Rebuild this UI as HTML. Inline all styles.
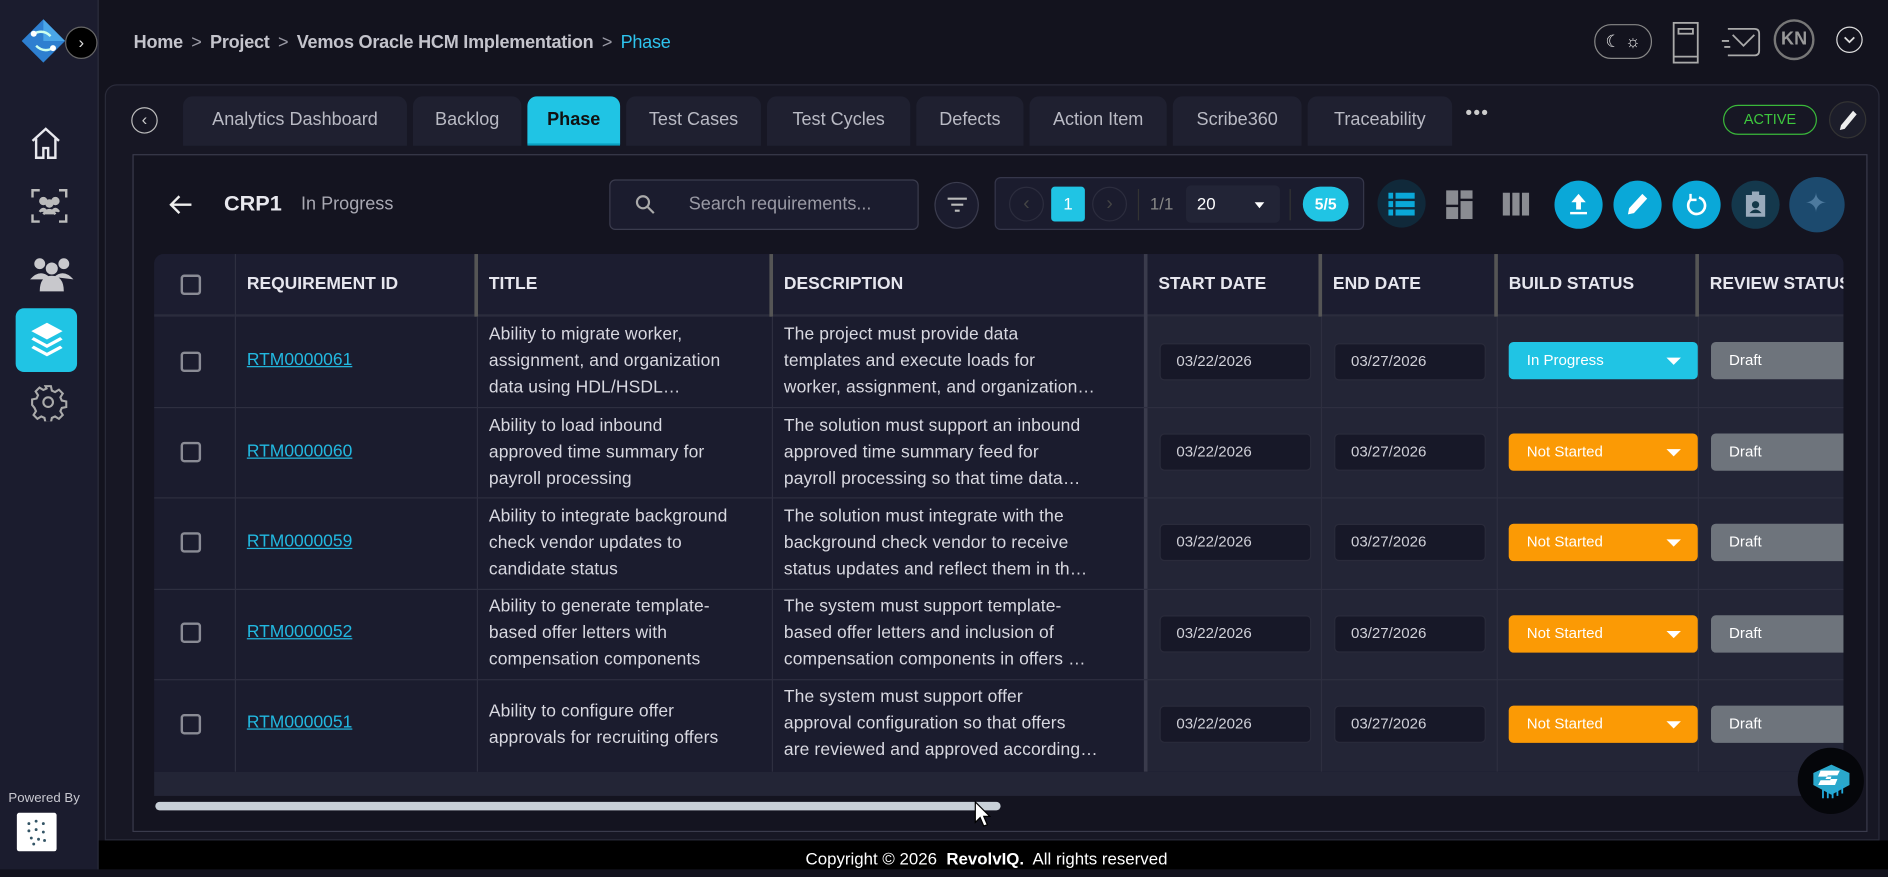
<!DOCTYPE html>
<html><head><meta charset="utf-8"><style>
*{box-sizing:border-box;margin:0;padding:0}
html,body{width:1888px;height:869px;overflow:hidden;background:#13131e;font-family:"Liberation Sans",sans-serif}
#w{position:absolute;left:0;top:0;width:1568px;height:722px;transform:scale(1.204082);transform-origin:0 0;background:#13131e}
.a{position:absolute}
.side{left:0;top:0;width:82px;height:722px;background:#1b1c2e;border-right:1px solid #2c2d3c}
.crumb{left:111px;top:27px;font-size:15px;font-weight:bold;color:#c4c4cc;letter-spacing:-.2px;white-space:nowrap}
.crumb span.s{color:#9a9aa5;font-weight:normal;margin:0 7px}
.main{left:87px;top:70px;width:1474px;height:628px;background:#171724;border:1px solid #2a2b3a;border-radius:10px 10px 0 0}
.tab{top:80px;height:41px;background:#1f2030;border-radius:8px 8px 0 0;color:#b9bac4;font-size:15px;line-height:40px;text-align:center;white-space:nowrap}
.tab.on{background:#20c4e4;color:#111;font-weight:bold;border-bottom:2px solid #0aa0c0}
.inner{left:110px;top:128px;width:1441px;height:563px;border:1px solid #3a3b4c;background:#141420}
.tbl{left:128px;top:211px;width:1403px;height:430px;background:#1b1c2e;border-radius:8px 8px 0 0;overflow:hidden}
.hd{top:0;height:52px;color:#e6e6ee;font-weight:bold;font-size:14.5px;line-height:50px;padding-left:10px;background:#1c1d30;border-bottom:2px solid #2b2c3d;white-space:nowrap;overflow:hidden}
.vl{width:1px;background:#2e2f40}
.hl{height:1px;background:#2e2f40;left:0;width:1403px}
.cell{color:#d8d8e0;font-size:14.5px;line-height:22px;padding-left:10px;white-space:nowrap;overflow:hidden;letter-spacing:.1px}
.lnk{color:#22b8e0;text-decoration:underline;font-size:14.5px}
.cb{width:17px;height:17px;border:2px solid #8a8b95;border-radius:3px}
.dt{width:126px;height:31px;background:#171828;border:1px solid #2a2b3b;border-radius:4px;color:#d0d0d8;font-size:12.5px;line-height:29px;padding-left:13px}
.st{width:157px;height:31px;border-radius:4px;color:#fff;font-size:12.5px;line-height:31px;padding-left:15px}
.st:after{content:"";position:absolute;right:14px;top:13px;border-left:6px solid transparent;border-right:6px solid transparent;border-top:6px solid #fff}
.dr{width:110px;height:31px;background:#6e747c;border-radius:4px 0 0 4px;color:#fff;font-size:12.5px;line-height:31px;padding-left:15px}
.cbtn{width:40px;height:40px;border-radius:50%}
</style></head><body><div id="w">
<div class="a side"></div>
<svg class="a" style="left:16px;top:14px" width="40" height="40" viewBox="0 0 40 40"><path d="M20 2 L38 20 L20 38 L2 20Z" fill="#2e7fd0"/><path d="M20 2 L38 20 L20 20Z" fill="#4aa6e8"/><path d="M12 14 Q20 10 26 16 M14 24 Q20 30 28 26" stroke="#cfe" stroke-width="2" fill="none"/><circle cx="12" cy="14" r="2.5" fill="#fff"/><circle cx="28" cy="26" r="2.5" fill="#fff"/></svg>
<div class="a" style="left:54px;top:22px;width:27px;height:27px;border-radius:50%;background:#000;border:1px solid #666;color:#ddd;font-size:14px;text-align:center;line-height:24px">›</div>
<svg class="a" style="left:24px;top:104px" width="28" height="30" viewBox="0 0 28 30" fill="none" stroke="#e8e8ee" stroke-width="2"><path d="M3 13 L14 3 L25 13 M6 11 V27 H12 V19 H16 V27 H22 V11"/></svg>
<svg class="a" style="left:25px;top:156px" width="32" height="30" viewBox="0 0 32 30" fill="none" stroke="#bbb" stroke-width="2"><path d="M2 8V2H8 M24 2H30V8 M2 22V28H8 M24 28H30V22"/><circle cx="11" cy="11" r="2.5" fill="#bbb"/><circle cx="21" cy="11" r="2.5" fill="#bbb"/><circle cx="16" cy="13" r="2.5" fill="#bbb"/><path d="M8 20 Q11 15 14 20 M18 20 Q21 15 24 20 M11 22 Q16 15 21 22" fill="#bbb"/></svg>
<svg class="a" style="left:23px;top:212px" width="40" height="32" viewBox="0 0 40 32" fill="#c8c8cc"><circle cx="10" cy="7" r="4.5"/><circle cx="30" cy="7" r="4.5"/><circle cx="20" cy="11" r="5"/><path d="M2 20 Q10 11 18 18 V20Z M22 18 Q30 11 38 20 V20Z M10 30 Q10 17 20 17 Q30 17 30 30Z"/></svg>
<div class="a" style="left:13px;top:256px;width:51px;height:53px;background:#20c4e4;border-radius:7px"></div>
<svg class="a" style="left:24px;top:266px" width="30" height="34" viewBox="0 0 30 34" fill="#fff"><path d="M15 2 L28 9 L15 16 L2 9Z"/><path d="M4 14 L15 20 L26 14 L28 16 L15 23 L2 16Z"/><path d="M4 21 L15 27 L26 21 L28 23 L15 30 L2 23Z"/></svg>
<svg class="a" style="left:24px;top:318px" width="32" height="32" viewBox="0 0 24 24" fill="none" stroke="#aaa" stroke-width="1.3"><circle cx="12" cy="12" r="3"/><path d="M10.3 2h3.4l.6 2.8 2 .9 2.4-1.5 2.4 2.4-1.5 2.4.9 2 2.8.6v3.4l-2.8.6-.9 2 1.5 2.4-2.4 2.4-2.4-1.5-2 .9-.6 2.8h-3.4l-.6-2.8-2-.9-2.4 1.5-2.4-2.4 1.5-2.4-.9-2L2 13.7v-3.4l2.8-.6.9-2-1.5-2.4 2.4-2.4 2.4 1.5 2-.9z"/></svg>
<div class="a" style="left:7px;top:657px;font-size:11px;color:#c8c8d0">Powered By</div>
<div class="a" style="left:14px;top:675px;width:33px;height:32px;background:#fff;border-radius:2px"></div>
<svg class="a" style="left:18px;top:678px" width="25" height="26" viewBox="0 0 25 26" fill="#356"><circle cx="6" cy="6" r="1.2"/><circle cx="12" cy="4" r="1.2"/><circle cx="18" cy="6" r="1.2"/><circle cx="6" cy="12" r="1.2"/><circle cx="12" cy="11" r="1.2"/><circle cx="18" cy="13" r="1.2"/><circle cx="8" cy="18" r="1.2"/><circle cx="14" cy="19" r="1.2"/><circle cx="19" cy="20" r="1.2"/><circle cx="10" cy="23" r="1.2"/></svg>

<div class="a crumb">Home<span class="s">&gt;</span>Project<span class="s">&gt;</span>Vemos Oracle HCM Implementation<span class="s">&gt;</span><span style="color:#2ec4ee;font-weight:normal">Phase</span></div>
<div class="a" style="left:1324px;top:20px;width:48px;height:29px;border:1px solid #888;border-radius:14px;color:#eee;font-size:14px;line-height:27px;text-align:center">☾ ☼</div>
<svg class="a" style="left:1387px;top:17px" width="26" height="40" viewBox="0 0 26 40" fill="none" stroke="#aaa" stroke-width="1.5"><rect x="3" y="2" width="20" height="33"/><rect x="7" y="7" width="12" height="4"/><path d="M3 30H23"/></svg>
<svg class="a" style="left:1429px;top:20px" width="34" height="36" viewBox="0 0 34 36" fill="none" stroke="#aaa" stroke-width="1.5"><path d="M6 4H28Q32 4 32 8V22Q32 26 28 26H6"/><path d="M10 9L19 18L28 9"/><path d="M1 14H7 M3 19H8"/></svg>
<div class="a" style="left:1473px;top:16px;width:34px;height:34px;border:2px solid #777;border-radius:50%;color:#999;font-size:15px;font-weight:bold;text-align:center;line-height:30px">KN</div>
<div class="a" style="left:1525px;top:22px;width:22px;height:22px;border:1.5px solid #ddd;border-radius:50%"></div>
<svg class="a" style="left:1530px;top:28px" width="12" height="10" viewBox="0 0 12 10"><path d="M2 3L6 7L10 3" stroke="#ddd" stroke-width="1.5" fill="none"/></svg>

<div class="a main"></div>
<div class="a" style="left:109px;top:89px;width:22px;height:22px;border:1.5px solid #bbb;border-radius:50%;color:#ccc;font-size:14px;text-align:center;line-height:18px">‹</div>
<div class="a tab" style="left:152px;width:186px">Analytics Dashboard</div>
<div class="a tab" style="left:343px;width:90px">Backlog</div>
<div class="a tab on" style="left:438px;width:77px">Phase</div>
<div class="a tab" style="left:520px;width:112px">Test Cases</div>
<div class="a tab" style="left:637px;width:119px">Test Cycles</div>
<div class="a tab" style="left:761px;width:89px">Defects</div>
<div class="a tab" style="left:855px;width:114px">Action Item</div>
<div class="a tab" style="left:974px;width:107px">Scribe360</div>
<div class="a tab" style="left:1086px;width:120px">Traceability</div>
<div class="a" style="left:1217px;top:86px;color:#ccc;font-size:16px;letter-spacing:1px">•••</div>
<div class="a" style="left:1431px;top:87px;width:78px;height:25px;border:1.5px solid #3ab83a;border-radius:13px;color:#3ec83e;font-size:12px;text-align:center;line-height:22px">ACTIVE</div>
<div class="a" style="left:1519px;top:84px;width:31px;height:31px;border-radius:50%;background:#1c1d2a;border:1px solid #333"></div>
<svg class="a" style="left:1526px;top:90px" width="18" height="20" viewBox="0 0 18 20"><path d="M13 2L16 5L6 17L2 18L3 14Z" fill="#eee"/></svg>

<div class="a inner"></div>
<svg class="a" style="left:139px;top:160px" width="22" height="20" viewBox="0 0 22 20" fill="none" stroke="#eee" stroke-width="2"><path d="M20 10H3 M10 3L3 10L10 17"/></svg>
<div class="a" style="left:186px;top:159px;color:#e8e8ee;font-size:18px;font-weight:bold">CRP1</div>
<div class="a" style="left:250px;top:161px;color:#a8a8b2;font-size:15px">In Progress</div>
<div class="a" style="left:506px;top:149px;width:257px;height:42px;border:1px solid #3b3c4e;border-radius:5px;background:#1b1c2e"></div>
<svg class="a" style="left:527px;top:161px" width="18" height="18" viewBox="0 0 18 18" fill="none" stroke="#aaa" stroke-width="1.8"><circle cx="7" cy="7" r="5"/><path d="M11 11L16 16"/></svg>
<div class="a" style="left:572px;top:161px;color:#9a9aa5;font-size:15px">Search requirements...</div>
<div class="a" style="left:776px;top:151px;width:37px;height:39px;border:1px solid #3b3c4e;border-radius:50%;background:#1b1c2e"></div>
<svg class="a" style="left:785px;top:162px" width="20" height="16" viewBox="0 0 20 16" stroke="#bbb" stroke-width="1.8"><path d="M2 3H18 M5 8H15 M8 13H12"/></svg>
<div class="a" style="left:826px;top:147px;width:307px;height:44px;border:1px solid #35364a;border-radius:5px;background:#1b1c2e"></div>
<div class="a" style="left:838px;top:155px;width:29px;height:29px;border:1px solid #2c2d3e;border-radius:50%;color:#444;text-align:center;line-height:27px">‹</div>
<div class="a" style="left:873px;top:155px;width:28px;height:29px;background:#20c4e4;border-radius:3px;color:#fff;font-size:14px;text-align:center;line-height:29px">1</div>
<div class="a" style="left:907px;top:155px;width:29px;height:29px;border:1px solid #2c2d3e;border-radius:50%;color:#444;text-align:center;line-height:27px">›</div>
<div class="a" style="left:945px;top:157px;width:1px;height:26px;background:#333"></div>
<div class="a" style="left:955px;top:161px;color:#888;font-size:14px">1/1</div>
<div class="a" style="left:985px;top:154px;width:78px;height:31px;background:#222436;border-radius:4px;color:#fff;font-size:14px;line-height:31px;padding-left:9px">20</div>
<div class="a" style="left:1042px;top:168px;border-left:4px solid transparent;border-right:4px solid transparent;border-top:5px solid #fff"></div>
<div class="a" style="left:1071px;top:157px;width:1px;height:26px;background:#333"></div>
<div class="a" style="left:1082px;top:155px;width:38px;height:29px;background:#20c4e4;border-radius:15px;color:#fff;font-size:13px;font-weight:bold;text-align:center;line-height:29px">5/5</div>
<div class="a cbtn" style="left:1144px;top:149px;background:#10293a"></div>
<svg class="a" style="left:1153px;top:160px" width="22" height="20" viewBox="0 0 22 20" fill="#0aa8d8"><rect x="0" y="0" width="4" height="5"/><rect x="6" y="0" width="16" height="5"/><rect x="0" y="7" width="4" height="5"/><rect x="6" y="7" width="16" height="5"/><rect x="0" y="14" width="4" height="5"/><rect x="6" y="14" width="16" height="5"/></svg>
<svg class="a" style="left:1201px;top:158px" width="22" height="24" viewBox="0 0 22 24" fill="#8a8c92"><rect x="0" y="0" width="10" height="12"/><rect x="12" y="0" width="10" height="7"/><rect x="12" y="9" width="10" height="15"/><rect x="0" y="14" width="10" height="10"/></svg>
<svg class="a" style="left:1248px;top:160px" width="22" height="20" viewBox="0 0 22 20" fill="#8a8c92"><rect x="0" y="0" width="6" height="19"/><rect x="8" y="0" width="6" height="19"/><rect x="16" y="0" width="6" height="19"/></svg>
<div class="a cbtn" style="left:1291px;top:150px;background:#0aa8d8"></div>
<svg class="a" style="left:1301px;top:159px" width="20" height="22" viewBox="0 0 20 22" fill="#fff"><path d="M10 2L16 9H12V15H8V9H4Z"/><rect x="3" y="17" width="14" height="2"/></svg>
<div class="a cbtn" style="left:1340px;top:150px;background:#0aa8d8"></div>
<svg class="a" style="left:1350px;top:159px" width="20" height="22" viewBox="0 0 20 22"><path d="M14 2L18 6L7 18L2 19L3 14Z" fill="#fff"/></svg>
<div class="a cbtn" style="left:1389px;top:150px;background:#0aa8d8"></div>
<svg class="a" style="left:1399px;top:160px" width="20" height="20" viewBox="0 0 20 20" fill="none" stroke="#fff" stroke-width="2.2"><path d="M6 5A7 7 0 1 0 12 4"/><path d="M5 1V6H10" stroke-width="2"/></svg>
<div class="a cbtn" style="left:1438px;top:150px;background:#14384c"></div>
<svg class="a" style="left:1449px;top:159px" width="18" height="22" viewBox="0 0 18 22" fill="#9ab"><path d="M1 3H17V21H1Z M6 0H12V5H6Z"/><circle cx="9" cy="11" r="3" fill="#143848"/><path d="M4 18Q9 12 14 18Z" fill="#143848"/></svg>
<div class="a cbtn" style="left:1486px;top:147px;width:46px;height:46px;background:#1c4a6e"></div>
<div class="a" style="left:1499px;top:156px;color:#4d7a9e;font-size:22px">✦</div>

<div class="a tbl">
 <div class="a hd" style="left:0;width:67px"></div>
 <div class="a hd" style="left:67px;width:201px;padding-left:10px">REQUIREMENT ID</div>
 <div class="a hd" style="left:268px;width:245px">TITLE</div>
 <div class="a hd" style="left:513px;width:311px">DESCRIPTION</div>
 <div class="a hd" style="left:824px;width:145px">START DATE</div>
 <div class="a hd" style="left:969px;width:146px">END DATE</div>
 <div class="a hd" style="left:1115px;width:167px">BUILD STATUS</div>
 <div class="a hd" style="left:1282px;width:121px">REVIEW STATUS</div>
 <div class="a" style="left:824px;top:52px;width:579px;height:378px;background:#232536"></div>
 <div class="a cb" style="left:22px;top:17px"></div>
 <div class="a vl" style="left:67px;top:0;height:430px"></div>
 <div class="a" style="left:266px;top:0;width:3px;height:52px;background:#555"></div>
 <div class="a vl" style="left:268px;top:52px;height:378px"></div>
 <div class="a" style="left:511px;top:0;width:3px;height:52px;background:#555"></div>
 <div class="a vl" style="left:513px;top:52px;height:378px"></div>
 <div class="a" style="left:822px;top:0;width:3px;height:430px;background:#3a3b4c"></div>
 <div class="a" style="left:967px;top:0;width:3px;height:52px;background:#555"></div>
 <div class="a vl" style="left:969px;top:52px;height:378px"></div>
 <div class="a" style="left:1113px;top:0;width:3px;height:52px;background:#555"></div>
 <div class="a vl" style="left:1115px;top:52px;height:378px"></div>
 <div class="a" style="left:1280px;top:0;width:3px;height:52px;background:#555"></div>
 <div class="a vl" style="left:1282px;top:52px;height:378px"></div>
 <div class="a hl" style="top:127px"></div><div class="a hl" style="top:202px"></div><div class="a hl" style="top:278px"></div><div class="a hl" style="top:353px"></div>
</div>
<div class="a" style="left:128px;top:641px;width:1403px;height:20px;background:#232536"></div>
<div class="a" style="left:129px;top:666px;width:702px;height:7px;background:#c8d0d8;border-radius:4px"></div>
<svg class="a" style="left:808px;top:664px" width="16" height="24" viewBox="0 0 16 24"><path d="M2 2V19L6 15L9 22L12 21L9 14H14Z" fill="#fff" stroke="#000" stroke-width="1"/></svg>
<div class="a" style="left:1493px;top:621px;width:55px;height:55px;border-radius:50%;background:#05060a"></div>
<svg class="a" style="left:1502px;top:632px" width="38" height="34" viewBox="0 0 38 34"><path d="M4 10L19 3L34 10L34 20L19 28L4 20Z" fill="#2aa8cc"/><path d="M10 8H26L24 12H16L14 15H24L22 20H8L10 16H18L19 13H8Z" fill="#fff"/><path d="M12 24V31 M16 24V31 M20 24V31 M24 22V29 M28 20V27" stroke="#2ad" stroke-width="1.5"/></svg>
<div class="a" style="left:82px;top:698px;width:1486px;height:24px;background:#000;color:#fff;font-size:14px;line-height:30px;padding-left:587px;white-space:nowrap">Copyright © 2026 &nbsp;<b>RevolvIQ.</b>&nbsp; All rights reserved</div>

<div class="a" style="left:128px;top:262px">
 <div class="a cb" style="left:22px;top:30px"></div>
 <div class="a lnk" style="left:77px;top:29px">RTM0000061</div>
 <div class="a cell" style="left:268px;top:5px">Ability to migrate worker,<br>assignment, and organization<br>data using HDL/HSDL…</div>
 <div class="a cell" style="left:513px;top:5px">The project must provide data<br>templates and execute loads for<br>worker, assignment, and organization…</div>
 <div class="a dt" style="left:835px;top:23px">03/22/2026</div>
 <div class="a dt" style="left:980px;top:23px">03/27/2026</div>
 <div class="a st" style="left:1125px;top:22px;background:#20c4e4">In Progress</div>
 <div class="a dr" style="left:1293px;top:22px">Draft</div>
</div>
<div class="a" style="left:128px;top:338px">
 <div class="a cb" style="left:22px;top:29px"></div>
 <div class="a lnk" style="left:77px;top:29px">RTM0000060</div>
 <div class="a cell" style="left:268px;top:5px">Ability to load inbound<br>approved time summary for<br>payroll processing</div>
 <div class="a cell" style="left:513px;top:5px">The solution must support an inbound<br>approved time summary feed for<br>payroll processing so that time data…</div>
 <div class="a dt" style="left:835px;top:22px">03/22/2026</div>
 <div class="a dt" style="left:980px;top:22px">03/27/2026</div>
 <div class="a st" style="left:1125px;top:22px;background:#fb9a05">Not Started</div>
 <div class="a dr" style="left:1293px;top:22px">Draft</div>
</div>
<div class="a" style="left:128px;top:413px">
 <div class="a cb" style="left:22px;top:29px"></div>
 <div class="a lnk" style="left:77px;top:29px">RTM0000059</div>
 <div class="a cell" style="left:268px;top:5px">Ability to integrate background<br>check vendor updates to<br>candidate status</div>
 <div class="a cell" style="left:513px;top:5px">The solution must integrate with the<br>background check vendor to receive<br>status updates and reflect them in th…</div>
 <div class="a dt" style="left:835px;top:22px">03/22/2026</div>
 <div class="a dt" style="left:980px;top:22px">03/27/2026</div>
 <div class="a st" style="left:1125px;top:22px;background:#fb9a05">Not Started</div>
 <div class="a dr" style="left:1293px;top:22px">Draft</div>
</div>
<div class="a" style="left:128px;top:489px">
 <div class="a cb" style="left:22px;top:28px"></div>
 <div class="a lnk" style="left:77px;top:28px">RTM0000052</div>
 <div class="a cell" style="left:268px;top:4px">Ability to generate template-<br>based offer letters with<br>compensation components</div>
 <div class="a cell" style="left:513px;top:4px">The system must support template-<br>based offer letters and inclusion of<br>compensation components in offers …</div>
 <div class="a dt" style="left:835px;top:22px">03/22/2026</div>
 <div class="a dt" style="left:980px;top:22px">03/27/2026</div>
 <div class="a st" style="left:1125px;top:22px;background:#fb9a05">Not Started</div>
 <div class="a dr" style="left:1293px;top:22px">Draft</div>
</div>
<div class="a" style="left:128px;top:564px">
 <div class="a cb" style="left:22px;top:29px"></div>
 <div class="a lnk" style="left:77px;top:28px">RTM0000051</div>
 <div class="a cell" style="left:268px;top:16px">Ability to configure offer<br>approvals for recruiting offers</div>
 <div class="a cell" style="left:513px;top:4px">The system must support offer<br>approval configuration so that offers<br>are reviewed and approved according…</div>
 <div class="a dt" style="left:835px;top:22px">03/22/2026</div>
 <div class="a dt" style="left:980px;top:22px">03/27/2026</div>
 <div class="a st" style="left:1125px;top:22px;background:#fb9a05">Not Started</div>
 <div class="a dr" style="left:1293px;top:22px">Draft</div>
</div>
</div></body></html>
